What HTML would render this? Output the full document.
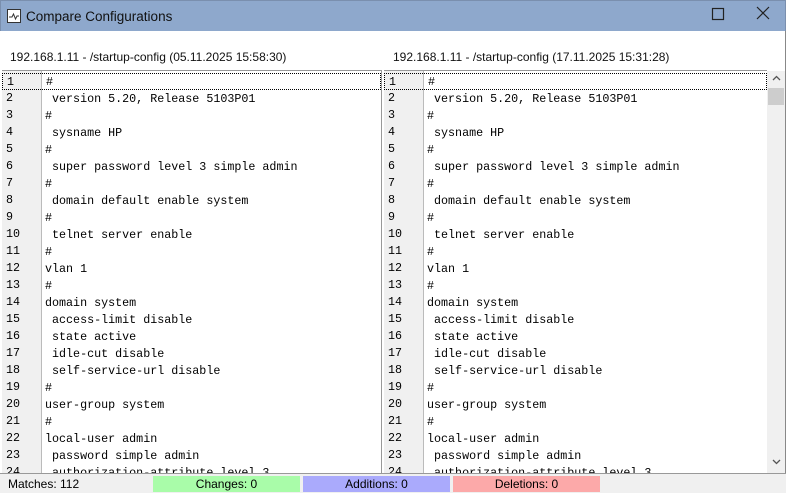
<!DOCTYPE html><html><head><style>
*{margin:0;padding:0;box-sizing:border-box}
body{width:786px;height:493px;overflow:hidden;background:#fff;font-family:"Liberation Sans",sans-serif;position:relative;border-right:1px solid #888}
.title{position:absolute;left:0;top:0;width:786px;height:31px;background:#8ea8cc;border:1px solid #7a8fae;border-bottom:none}
.title span{position:absolute;left:25px;top:8px;font-size:13.5px;color:#111}
.hdr{position:absolute;top:50px;font-size:12px;color:#111}
.pane{position:absolute;top:70px;height:403px;overflow:hidden;border-top:1px solid #999;background:#fff}
.gut{position:absolute;left:0;top:0;width:40px;height:100%;background:#f0f0f0;border-right:1px solid #bbb}
.row{position:absolute;left:0;height:17px;width:100%;font-family:"Liberation Mono",monospace;font-size:11.7px;line-height:17px;color:#000;white-space:pre}
.row .n{position:absolute;left:4px}
.row .t{position:absolute;left:43px}
.sb{position:absolute;left:767px;top:71px;width:18px;height:402px;background:#f0f0f0}
.status{position:absolute;left:0;top:473px;width:786px;height:20px;background:#f0f0f0;border-top:1px solid #999;font-size:12px}
.status div{position:absolute;top:2px;height:16px;text-align:center;line-height:16px}
</style></head><body>
<div class="title"><svg style="position:absolute;left:6px;top:8px" width="14" height="14"><rect x="0.5" y="0.5" width="13" height="13" fill="#fff" stroke="#333"/><path d="M2 8h3l1.5-3 2 5 1.5-3h2" fill="none" stroke="#333"/></svg><span>Compare Configurations</span>
<svg style="position:absolute;left:710px;top:6px" width="14" height="14"><rect x="1.5" y="1.5" width="11" height="11" fill="none" stroke="#222" stroke-width="1.2"/></svg>
<svg style="position:absolute;left:755px;top:5px" width="14" height="14"><path d="M1 1L13 13M13 1L1 13" stroke="#222" stroke-width="1.2"/></svg></div>
<div class="hdr" style="left:10px">192.168.1.11 - /startup-config (05.11.2025 15:58:30)</div>
<div class="hdr" style="left:393px">192.168.1.11 - /startup-config (17.11.2025 15:31:28)</div>
<div id="L" class="pane" style="left:2px;width:380px;border-right:1px solid #999"><div class="gut"></div></div>
<div id="R" class="pane" style="left:384px;width:383px"><div class="gut"></div></div>
<div class="sb"><svg style="position:absolute;left:5px;top:4px" width="9" height="6"><path d="M1 5L4.5 1.5L8 5" fill="none" stroke="#555" stroke-width="1.3"/></svg><div style="position:absolute;left:1px;top:17px;width:16px;height:17px;background:#cdcdcd"></div><svg style="position:absolute;left:5px;top:388px" width="9" height="6"><path d="M1 1L4.5 4.5L8 1" fill="none" stroke="#555" stroke-width="1.3"/></svg></div>
<div class="status"><div style="left:8px;text-align:left">Matches: 112</div>
<div style="left:153px;width:147px;background:#a9fca9">Changes: 0</div>
<div style="left:303px;width:147px;background:#aaaafc">Additions: 0</div>
<div style="left:453px;width:147px;background:#fca9a9">Deletions: 0</div></div>
<script>
var lines=["#"," version 5.20, Release 5103P01","#"," sysname HP","#"," super password level 3 simple admin","#"," domain default enable system","#"," telnet server enable","#","vlan 1","#","domain system"," access-limit disable"," state active"," idle-cut disable"," self-service-url disable","#","user-group system","#","local-user admin"," password simple admin"," authorization-attribute level 3"];
["L","R"].forEach(function(id){var p=document.getElementById(id),h="";lines.forEach(function(l,i){var st=i==0?"border:1px dotted #000;":"";h+='<div class="row" style="top:'+(2+17*i)+'px;'+st+'"><span class="n">'+(i+1)+'</span><span class="t" style="top:'+(i==0?0:1)+'px">'+l+'</span></div>';});p.innerHTML+=h;});
</script>
</body></html>
